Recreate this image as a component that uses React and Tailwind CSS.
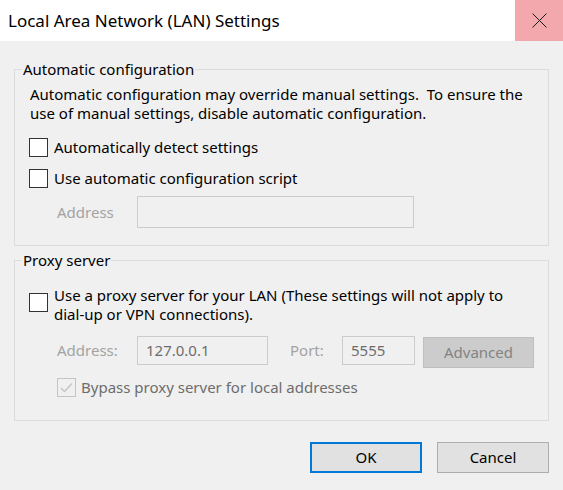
import React from 'react';

const Box = ({ checked, disabled }) => (
    <span
        className={`w-[19px] h-[19px] shrink-0 border flex items-center justify-center ${
            disabled ? 'border-[#c4c4c4] bg-[#f0f0f0]' : 'border-[#333333] bg-white'
        }`}
    >
        {checked && (
            <svg width="13" height="11" viewBox="0 0 13 11" fill="none">
                <path d="M1 6 L4.5 9.5 L12 1.5" stroke={disabled ? '#c4c4c4' : '#000'} strokeWidth="1.4" />
            </svg>
        )}
    </span>
);

const App = () => {
    return (
        <div className="w-[563px] h-[490px] bg-[#f0f0f0] font-['Noto_Sans',sans-serif] text-[15px] text-black overflow-hidden">
            {/* title bar */}
            <div className="h-[41px] bg-white flex items-center justify-between">
                <span className="pl-[8px] text-[17px] leading-none">Local Area Network (LAN) Settings</span>
                <div className="w-[48px] h-full bg-[#f3a8ae] flex items-center justify-center">
                    <svg width="15" height="15" viewBox="0 0 15 15">
                        <path d="M0.5 0.5 L14.5 14.5 M14.5 0.5 L0.5 14.5" stroke="#1a1a1a" strokeWidth="1" />
                    </svg>
                </div>
            </div>

            <div className="px-[14px] pt-[18px]">
                {/* automatic configuration */}
                <fieldset className="border border-[#dcdcdc] pl-[15px] pr-[10px] pb-[17px]">
                    <legend className="-ml-[8px] px-[1px] leading-[20px]">Automatic configuration</legend>
                    <p className="mt-[6px] leading-[19px]">
                        Automatic configuration may override manual settings.&nbsp; To ensure the
                        <br />
                        use of manual settings, disable automatic configuration.
                    </p>
                    <label className="mt-[15px] -ml-px flex items-center gap-[6px] leading-[19px]">
                        <Box />
                        <span>Automatically detect settings</span>
                    </label>
                    <label className="mt-[12px] -ml-px flex items-center gap-[6px] leading-[19px]">
                        <Box />
                        <span>Use automatic configuration script</span>
                    </label>
                    <div className="mt-[8px] flex items-center">
                        <span className="w-[107px] pl-[27px] text-[#a3a3a3]">Address</span>
                        <div className="w-[277px] h-[32px] border border-[#cccccc]" />
                    </div>
                </fieldset>

                {/* proxy server */}
                <fieldset className="mt-[4px] border border-[#dcdcdc] pl-[15px] pr-[10px] pb-[23px]">
                    <legend className="-ml-[8px] px-[1px] leading-[20px]">Proxy server</legend>
                    <label className="mt-[16px] -ml-px flex items-start gap-[6px] leading-[19px]">
                        <span className="mt-[7px]">
                            <Box />
                        </span>
                        <span>
                            Use a proxy server for your LAN (These settings will not apply to
                            <br />
                            dial-up or VPN connections).
                        </span>
                    </label>
                    <div className="mt-[12px] flex items-start">
                        <span className="w-[107px] pl-[27px] h-[28px] flex items-center text-[#a3a3a3]">Address:</span>
                        <div className="w-[131px] h-[29px] border border-[#cccccc] flex items-center pl-[8px] text-[#6d6d6d]">
                            127.0.0.1
                        </div>
                        <span className="w-[74px] pl-[22px] h-[28px] flex items-center text-[#a3a3a3]">Port:</span>
                        <div className="w-[73px] h-[29px] border border-[#cccccc] flex items-center pl-[8px] text-[#6d6d6d]">
                            5555
                        </div>
                        <div className="ml-[8px] mt-px w-[111px] h-[31px] bg-[#cccccc] border border-[#bfbfbf] flex items-center justify-center text-[#838383]">
                            Advanced
                        </div>
                    </div>
                    <label className="mt-[9px] ml-[27px] flex items-center gap-[5px] leading-[20px] text-[#6d6d6d]">
                        <Box checked disabled />
                        <span>Bypass proxy server for local addresses</span>
                    </label>
                </fieldset>

                {/* buttons */}
                <div className="mt-[21px] flex justify-end gap-[15px]">
                    <button className="w-[112px] h-[31px] bg-[#e1e1e1] border-2 border-[#0078d7] leading-none">OK</button>
                    <button className="w-[112px] h-[31px] bg-[#e1e1e1] border border-[#adadad] leading-none">Cancel</button>
                </div>
            </div>
        </div>
    );
};

export default App;
